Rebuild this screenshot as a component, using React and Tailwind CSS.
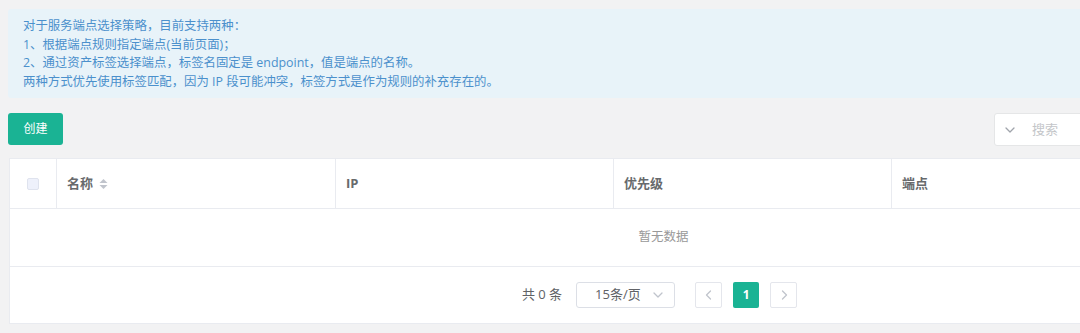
import React from "react";

const font = { fontFamily: '"Open Sans", "Noto Sans CJK SC", sans-serif' };

const columns = [
  { key: "name", label: "名称", sortable: true, width: "w-[279px]" },
  { key: "ip", label: "IP", width: "w-[278px]" },
  { key: "priority", label: "优先级", width: "w-[278px]" },
  { key: "endpoint", label: "端点", width: "w-[278px]" },
  { key: "action", label: "", width: "flex-1" },
];

const SortIcon = () => (
  <svg width="9" height="12" viewBox="0 0 9 12" className="ml-1.5">
    <path d="M4.5 1 L8.5 5 L0.5 5 Z" fill="#c0c4cc" />
    <path d="M4.5 11 L8.5 7 L0.5 7 Z" fill="#c0c4cc" />
  </svg>
);

const Chevron = ({ dir = "down", color = "#a0a4ab" }) => {
  const d = {
    down: "M2 4 L6 8 L10 4",
    left: "M7.5 2 L3.5 6 L7.5 10",
    right: "M4.5 2 L8.5 6 L4.5 10",
  }[dir];
  return (
    <svg width="12" height="12" viewBox="0 0 12 12">
      <path d={d} fill="none" stroke={color} strokeWidth="1.3" strokeLinecap="round" strokeLinejoin="round" />
    </svg>
  );
};

const App = () => {
  return (
    <div className="w-[1080px] h-[333px] overflow-hidden bg-[#f2f2f3]" style={font}>
      <div className="w-[1318px] pl-2 pt-[9px]">
        {/* info */}
        <div className="rounded-[3px] bg-[#e8f3f9] pl-[15px] pt-[8px] pb-[7px] text-[12.4px] leading-[18.5px] text-[#4b90cc]">
          <div>对于服务端点选择策略，目前支持两种：</div>
          <div>1、根据端点规则指定端点(当前页面)；</div>
          <div>2、通过资产标签选择端点，标签名固定是 endpoint，值是端点的名称。</div>
          <div>两种方式优先使用标签匹配，因为 IP 段可能冲突，标签方式是作为规则的补充存在的。</div>
        </div>

        {/* toolbar */}
        <div className="mt-[15px] flex items-start justify-between">
          <button className="h-[32px] w-[55px] rounded-[3px] bg-[#1ab394] text-[12px] text-white">
            创建
          </button>
          <div className="flex h-[33px] w-[324px] items-center rounded-[3px] border border-[#e5e6e7] bg-white pl-[9px]">
            <Chevron />
            <span className="ml-[16px] text-[13px] text-[#c4c6c9]">搜索</span>
          </div>
        </div>

        {/* table */}
        <div className="mt-[12px] ml-px border border-[#e9ebf0] bg-white">
          <div className="flex h-[50px] border-b border-[#e9ebf0] text-[13px] font-bold text-[#676a6c]">
            <div className="flex w-[47px] items-center justify-center border-r border-[#e9ebf0]">
              <span className="h-[12px] w-[12px] rounded-[2px] border border-[#dfe3ee] bg-[#eef1fb]" />
            </div>
            {columns.map((c, i) => (
              <div
                key={c.key}
                className={`flex items-center pl-[10px] ${c.width} ${i < 3 ? "border-r border-[#e9ebf0]" : ""}`}
              >
                {c.label}
                {c.sortable && <SortIcon />}
              </div>
            ))}
          </div>
          <div className="flex h-[58px] items-center justify-center border-b border-[#e9ebf0] text-[12.5px] text-[#999]">
            暂无数据
          </div>
          <div className="flex h-[56px] items-center justify-center pr-[8px] text-[13px] text-[#606266]">
            <span>共 0 条</span>
            <div className="ml-[14px] flex h-[26px] w-[99px] items-center rounded-[3px] border border-[#dcdfe6] pl-[18px] pr-[10px]">
              <span className="flex-1 text-[13px] text-[#606266]">15条/页</span>
              <Chevron color="#c0c4cc" />
            </div>
            <button className="ml-[20px] flex h-[26px] w-[27px] items-center justify-center rounded-[2px] border border-[#e4e6ec] bg-white">
              <Chevron dir="left" color="#c0c4cc" />
            </button>
            <button className="ml-[11px] h-[26px] w-[26px] rounded-[2px] bg-[#1ab394] text-[12px] font-bold text-white">
              1
            </button>
            <button className="ml-[11px] flex h-[26px] w-[27px] items-center justify-center rounded-[2px] border border-[#e4e6ec] bg-white">
              <Chevron dir="right" color="#c0c4cc" />
            </button>
          </div>
        </div>
      </div>
    </div>
  );
};

export default App;
